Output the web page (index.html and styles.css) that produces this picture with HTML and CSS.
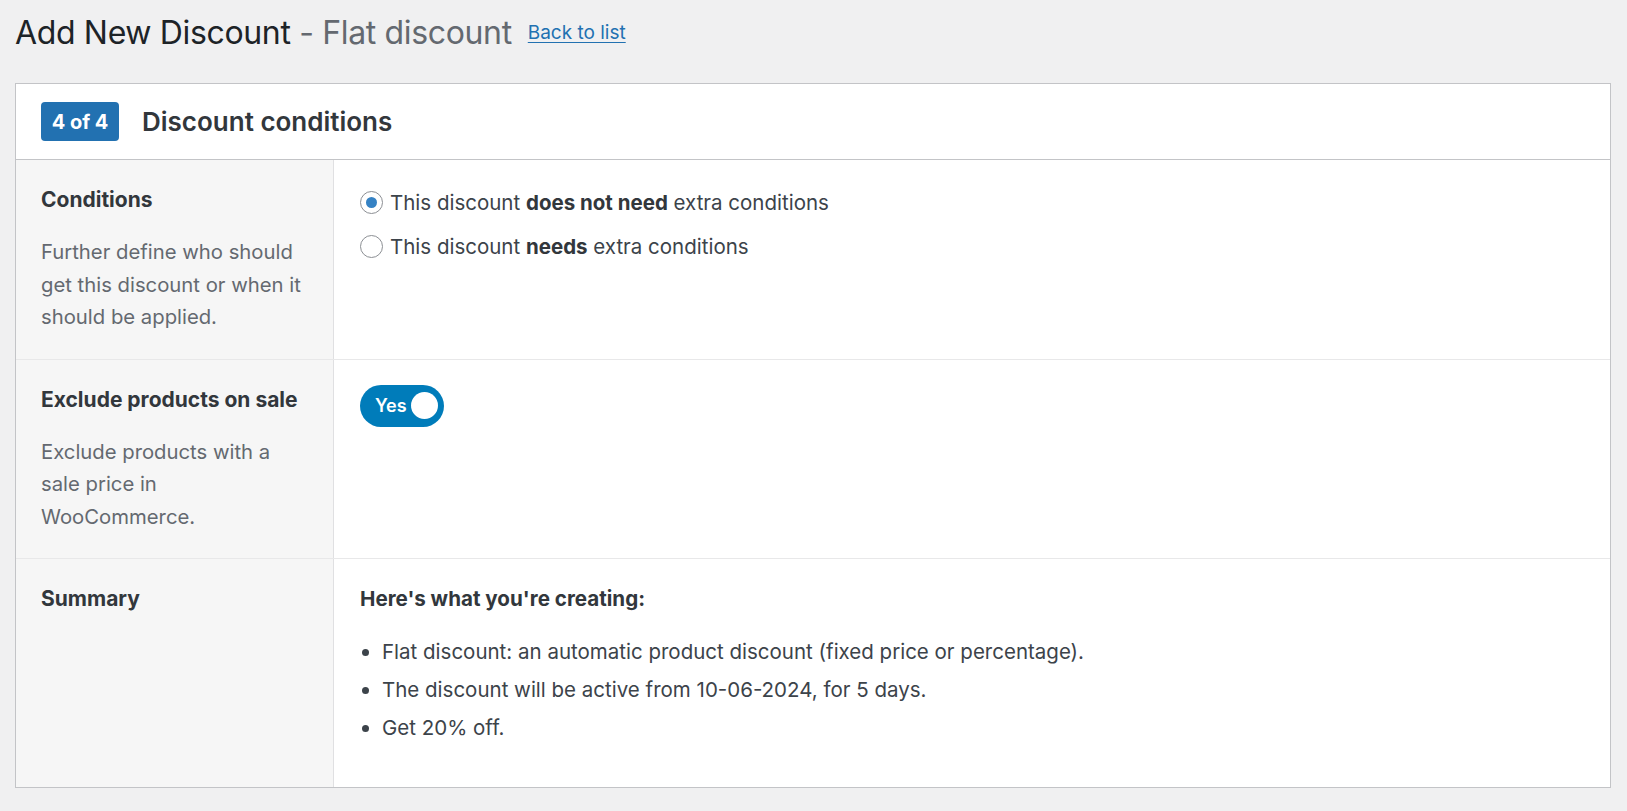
FILE: index.html
```html
<!DOCTYPE html>
<html lang="en">
<head>
<meta charset="utf-8">
<title>Add New Discount - Flat discount</title>
<link rel="stylesheet" href="styles.css">
</head>
<body>
<div class="wrap">
  <div class="headline">
    <h1 class="title">Add New Discount <span class="sub">- Flat discount</span></h1>
    <a class="back" href="#">Back to list</a>
  </div>

  <div class="card">
    <div class="card-head">
      <span class="badge">4 of 4</span>
      <h2 class="card-title">Discount conditions</h2>
    </div>

    <div class="row">
      <div class="label-col">
        <div class="label">Conditions</div>
        <p class="desc">Further define who should get this discount or when it should be applied.</p>
      </div>
      <div class="field-col">
        <label class="option">
          <span class="radio checked"></span>
          <span>This discount <strong>does not need</strong> extra conditions</span>
        </label>
        <label class="option">
          <span class="radio"></span>
          <span>This discount <strong>needs</strong> extra conditions</span>
        </label>
      </div>
    </div>

    <div class="row">
      <div class="label-col">
        <div class="label">Exclude products on sale</div>
        <p class="desc">Exclude products with a sale price in WooCommerce.</p>
      </div>
      <div class="field-col field-toggle">
        <span class="toggle"><span class="toggle-text">Yes</span><span class="knob"></span></span>
      </div>
    </div>

    <div class="row row-last">
      <div class="label-col">
        <div class="label">Summary</div>
      </div>
      <div class="field-col field-summary">
        <div class="summary-title">Here's what you're creating:</div>
        <ul class="summary-list">
          <li>Flat discount: an automatic product discount (fixed price or percentage).</li>
          <li>The discount will be active from 10-06-2024, for 5 days.</li>
          <li>Get 20% off.</li>
        </ul>
      </div>
    </div>
  </div>
</div>
</body>
</html>
```

FILE: styles.css
```css
* { box-sizing: border-box; }

html, body {
  margin: 0;
  padding: 0;
  background: #f0f0f1;
  font-family: Inter, "Noto Sans", "Liberation Sans", sans-serif;
  color: #3c434a;
}

.wrap {
  padding: 12px 16px 0 15px;
}

.headline {
  display: flex;
  align-items: center;
  gap: 16px;
  height: 42px;
}

.title {
  margin: 0;
  font-size: 32px;
  line-height: 42px;
  font-weight: 400;
  color: #1d2327;
  letter-spacing: -0.35px;
}

.sub {
  color: #646970;
}

.back {
  font-size: 19px;
  line-height: 26px;
  color: #2271b1;
  text-decoration: underline;
  text-underline-offset: 3px;
  text-decoration-thickness: 1px;
}

.card {
  margin-top: 29px;
  background: #fff;
  border: 1px solid #c3c4c7;
}

.card-head {
  display: flex;
  align-items: center;
  gap: 23px;
  padding: 18px 25px;
  border-bottom: 1px solid #c3c4c7;
}

.badge {
  display: inline-flex;
  align-items: center;
  justify-content: center;
  height: 39px;
  width: 78px;
  border-radius: 4px;
  background: #2271b1;
  color: #fff;
  font-size: 20px;
  font-weight: 700;
}

.card-title {
  margin: 0;
  font-size: 26px;
  font-weight: 600;
  color: #32373c;
}

.row {
  display: grid;
  grid-template-columns: 318px 1fr;
  border-bottom: 1px solid #e8e8e9;
}

.row-last {
  border-bottom: 0;
}

.label-col {
  background: #f6f6f6;
  border-right: 1px solid #e0e0e2;
  padding: 26px 26px 25px 25px;
}

.label {
  font-size: 21px;
  line-height: 28px;
  font-weight: 700;
  color: #32373c;
}

.desc {
  margin: 22px 0 0;
  font-size: 20.3px;
  line-height: 32.5px;
  color: #646970;
}

.field-col {
  padding: 26px 26px 26px 26px;
}

.option {
  display: flex;
  align-items: center;
  gap: 7px;
  height: 32px;
  margin-bottom: 12px;
  font-size: 20.5px;
  color: #3c434a;
}

.option strong {
  color: #32373c;
  font-weight: 700;
}

.radio {
  flex: none;
  width: 23px;
  height: 23px;
  border-radius: 50%;
  border: 1px solid #8c8f94;
  background: #fff;
  display: flex;
  align-items: center;
  justify-content: center;
}

.radio.checked::after {
  content: "";
  width: 11px;
  height: 11px;
  border-radius: 50%;
  background: #3582c4;
}

.field-toggle {
  padding-top: 25px;
}

.toggle {
  display: inline-flex;
  align-items: center;
  justify-content: space-between;
  width: 84px;
  height: 42px;
  border-radius: 21px;
  background: #007cba;
  padding: 0 6px 0 15px;
}

.toggle-text {
  color: #fff;
  font-size: 18px;
  font-weight: 600;
}

.knob {
  width: 27px;
  height: 27px;
  border-radius: 50%;
  background: #fff;
}

.field-summary {
  padding-bottom: 40px;
}

.summary-title {
  font-size: 20.6px;
  line-height: 28px;
  font-weight: 700;
  color: #32373c;
}

.summary-list {
  margin: 20px 0 0;
  padding: 0 0 0 22px;
  font-size: 20.5px;
  line-height: 38px;
  color: #3c434a;
}
```
